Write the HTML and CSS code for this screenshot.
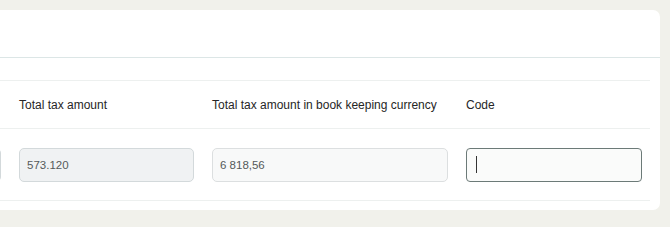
FILE: index.html
```html
<!DOCTYPE html>
<html>
<head>
<meta charset="utf-8">
<link rel="stylesheet" href="styles.css">
</head>
<body>
<div class="card">
  <div class="card-header"></div>
  <div class="card-body">
    <div class="table">
      <div class="row head">
        <div class="cell c0"></div>
        <div class="cell c1">Total tax amount</div>
        <div class="cell c2">Total tax amount in book keeping currency</div>
        <div class="cell c3">Code</div>
      </div>
      <div class="row body">
        <div class="cell c0"><div class="field ro"></div></div>
        <div class="cell c1"><div class="field ro">573.120</div></div>
        <div class="cell c2"><div class="field soft">6 818,56</div></div>
        <div class="cell c3"><div class="field focus"><span class="caret"></span></div></div>
      </div>
    </div>
  </div>
</div>
</body>
</html>
```
FILE: styles.css
```css
html, body {
  margin: 0;
  padding: 0;
  background: #f1f1eb;
  font-family: "Liberation Sans", Arial, sans-serif;
}
body {
  padding-top: 10px;
  height: 227px;
  box-sizing: border-box;
  overflow: hidden;
}
.card {
  width: 660px;
  height: 200px;
  background: #ffffff;
  border-radius: 0 7px 7px 0;
  overflow: hidden;
  box-sizing: border-box;
}
.card-header {
  height: 47px;
  border-bottom: 1px solid #dce6e6;
}
.card-body {
  padding-top: 22px;
}
.table {
  width: 750px;
  margin-left: -100px;
  border-top: 1px solid #edf0ef;
}
.row {
  display: flex;
  gap: 18px;
}
.head {
  height: 47px;
  align-items: center;
  border-bottom: 1px solid #edf0ef;
  font-size: 12px;
  color: #262626;
}
.body {
  height: 71px;
  align-items: center;
  border-bottom: 1px solid #edf0ef;
}
.c0 { width: 101px; }
.c1 { width: 175px; }
.c2 { width: 236px; }
.c3 { width: 176px; }
.field {
  height: 34px;
  box-sizing: border-box;
  border-radius: 5px;
  padding-left: 7px;
  display: flex;
  align-items: center;
  font-size: 11.5px;
  color: #555a5a;
}
.ro {
  background: #f0f2f3;
  border: 1px solid #d3d9db;
}
.soft {
  background: #f8f9f9;
  border: 1px solid #dcdfe0;
}
.focus {
  background: #fafbfa;
  border: 1.5px solid #6c7a78;
  border-radius: 4px;
  padding-left: 8.5px;
}
.caret {
  display: block;
  width: 1px;
  height: 17px;
  background: #333;
}
```
